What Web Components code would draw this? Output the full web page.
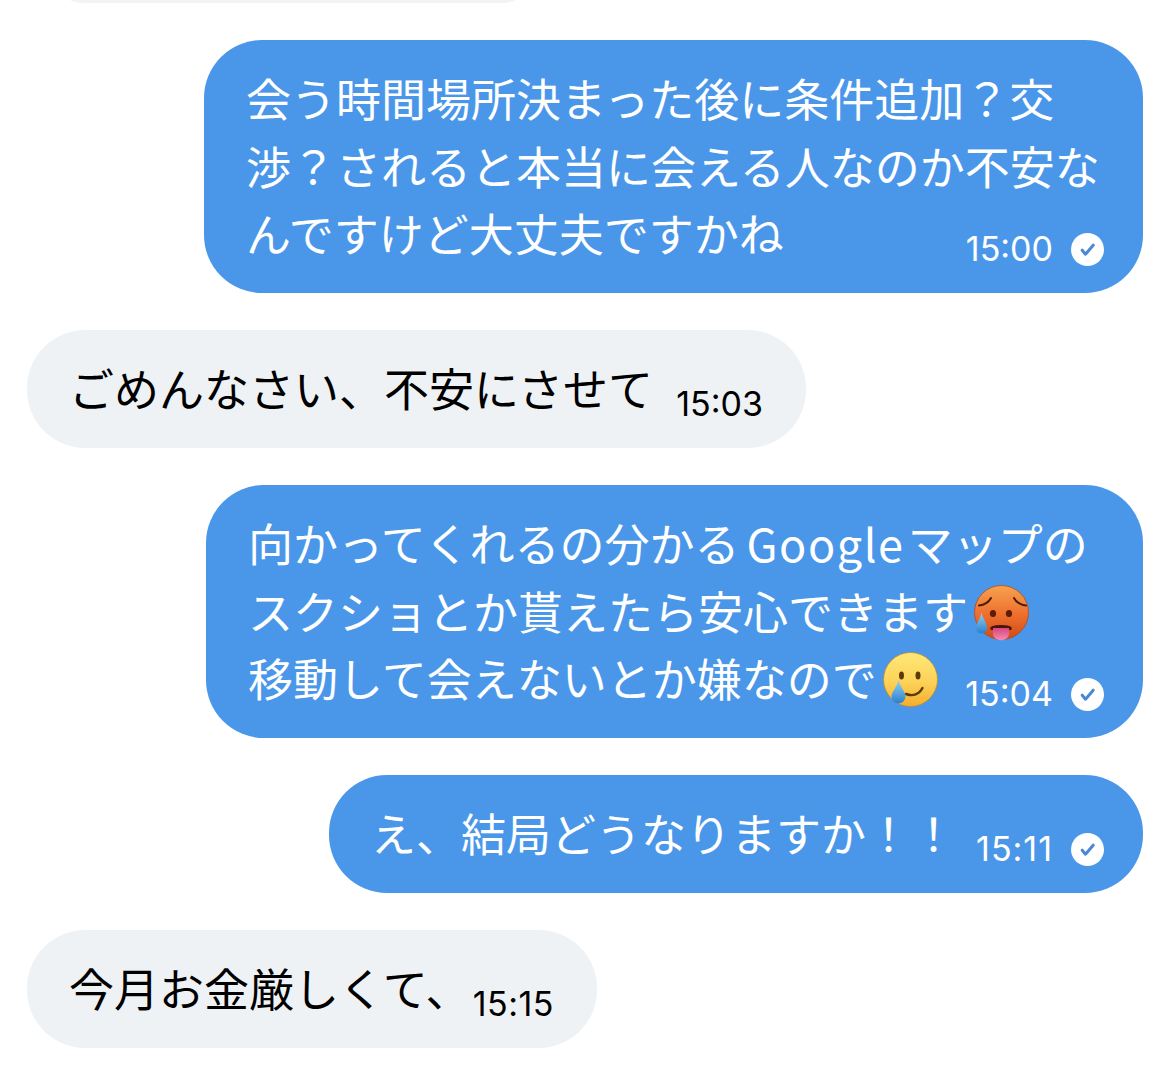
<!DOCTYPE html>
<html lang="ja">
<head>
<meta charset="utf-8">
<title>chat</title>
<style>
  html, body { margin: 0; background: #fff; }
  body { font-family: "Noto Sans CJK JP", "Noto Sans", sans-serif; }
</style>
</head>
<body>
<chat-log>
  <chat-bubble class="cut" side="in" width="480" indent="26"></chat-bubble>

  <chat-bubble side="out" width="939">
    <chat-line>会う時間場所決まった後に条件追加？交</chat-line>
    <chat-line>渉？されると本当に会える人なのか不安な</chat-line>
    <chat-line>んですけど大丈夫ですかね<chat-meta time="15:00" read></chat-meta></chat-line>
  </chat-bubble>

  <chat-bubble side="in" width="779">
    <chat-line>ごめんなさい、不安にさせて<chat-meta time="15:03"></chat-meta></chat-line>
  </chat-bubble>

  <chat-bubble side="out" width="937">
    <chat-line>向かってくれるの分かる<chat-latin>Google</chat-latin>マップの</chat-line>
    <chat-line>スクショとか貰えたら安心できます<chat-emoji kind="hot"></chat-emoji></chat-line>
    <chat-line>移動して会えないとか嫌なので<chat-emoji kind="tear"></chat-emoji><chat-meta time="15:04" read></chat-meta></chat-line>
  </chat-bubble>

  <chat-bubble side="out" width="814">
    <chat-line>え、結局どうなりますか！！<chat-meta time="15:11" track="1" read></chat-meta></chat-line>
  </chat-bubble>

  <chat-bubble side="in" width="570">
    <chat-line>今月お金厳しくて、<chat-meta time="15:15" track="0.5"></chat-meta></chat-line>
  </chat-bubble>
</chat-log>

<script>
class ChatLog extends HTMLElement {
  connectedCallback() {
    this.attachShadow({ mode: 'open' });
    this.shadowRoot.innerHTML = `
      <style>
        :host {
          display: flex;
          flex-direction: column;
          gap: 37.5px;
          padding: 0 27px 17px 27px;
          overflow: hidden;
          height: 1065px;
          box-sizing: border-box;
        }
      </style>
      <slot></slot>
    `;
  }
}
customElements.define('chat-log', ChatLog);

class ChatBubble extends HTMLElement {
  connectedCallback() {
    const out = this.getAttribute('side') === 'out';
    const width = this.getAttribute('width');
    const cut = this.classList.contains('cut');
    this.attachShadow({ mode: 'open' });
    this.shadowRoot.innerHTML = `
      <style>
        :host {
          display: block;
          box-sizing: border-box;
          width: ${width}px;
          flex: none;
          padding: 24px ${out ? 39 : 43}px 26px 42px;
          border-radius: 58px;
          font-size: 45px;
          background: ${out ? '#4a97ea' : '#eff2f4'};
          color: ${out ? '#fff' : '#000'};
          align-self: ${out ? 'flex-end' : 'flex-start'};
          ${cut ? `height: 60px; margin-top: -57.5px; margin-left: ${this.getAttribute('indent')}px; background: #f2f3f5;` : ''}
        }
      </style>
      <slot></slot>
    `;
  }
}
customElements.define('chat-bubble', ChatBubble);

class ChatLine extends HTMLElement {
  connectedCallback() {
    this.attachShadow({ mode: 'open' });
    this.shadowRoot.innerHTML = `
      <style>
        :host {
          display: flex;
          align-items: center;
          height: 67.5px;
          line-height: 67.5px;
          white-space: nowrap;
          font-weight: 400;
        }
      </style>
      <slot></slot>
    `;
  }
}
customElements.define('chat-line', ChatLine);

// Google sits a little wider than the kana around it
class ChatLatin extends HTMLElement {
  connectedCallback() {
    this.attachShadow({ mode: 'open' });
    this.shadowRoot.innerHTML = `
      <style>
        :host { display: block; margin: 0 3px 0 7px; letter-spacing: 1.6px; }
      </style>
      <slot></slot>
    `;
  }
}
customElements.define('chat-latin', ChatLatin);

class ChatMeta extends HTMLElement {
  connectedCallback() {
    const read = this.hasAttribute('read');
    const track = this.getAttribute('track') || 0;
    this.attachShadow({ mode: 'open' });
    this.shadowRoot.innerHTML = `
      <style>
        :host {
          display: flex;
          align-items: center;
          gap: 18px;
          margin-left: auto;
          margin-bottom: 2.5px;
          align-self: flex-end;
          height: 30px;
          font: 400 34px/30px Inter, "Liberation Sans", sans-serif;
          letter-spacing: ${track}px;
        }
        svg { width: 33px; height: 33px; display: block; flex: none; }
      </style>
      <span>${this.getAttribute('time')}</span>
      ${read ? `<svg viewBox="0 0 33 33">
        <circle cx="16.5" cy="16.5" r="16.500" fill="#fff"/>
        <path d="M11.2 17.2l3.300 4 7.700-9" fill="none" stroke="#4a88d4" stroke-width="3" stroke-linecap="round" stroke-linejoin="round"/>
      </svg>` : ''}
    `;
  }
}
customElements.define('chat-meta', ChatMeta);

class ChatEmoji extends HTMLElement {
  connectedCallback() {
    const hot = this.getAttribute('kind') === 'hot';
    const id = hot ? 'h' : 't';
    const face = hot ? `
      <circle cx="27.500" cy="27.500" r="27" fill="url(#${id}f)" stroke="#b5491c" stroke-width=".8"/>
      <path d="M5 20.500c5-.5 9.500-3 12-7.500M52 20.500c-5-.5-9.500-3-12-7.500" fill="none" stroke="#4a1d08" stroke-width="2" stroke-linecap="round"/>
      <ellipse cx="19" cy="28.500" rx="3.100" ry="3.600" fill="#5a1e08"/>
      <ellipse cx="35" cy="28.500" rx="3.100" ry="3.600" fill="#5a1e08"/>
      <path d="M16.500 42.500c1-3.500 20-3.500 21 0v2.500h-21z" fill="#4d1408"/>
      <path d="M19 43h16v5.500c0 9-16 9-16 0z" fill="url(#${id}m)"/>
      <path d="M7.500 27.500c-1.500 7-5.500 11-5.500 15.500a5.600 5.600 0 0 0 11.200 0c0-4.500-4-8.500-5.700-15.500z" fill="url(#${id}d)"/>
    ` : `
      <circle cx="27.500" cy="27.500" r="27" fill="url(#${id}f)" stroke="#c08a2a" stroke-width=".8"/>
      <ellipse cx="18.500" cy="23.500" rx="2.500" ry="4" fill="#5b3a0a"/>
      <ellipse cx="35" cy="23.500" rx="2.500" ry="4" fill="#5b3a0a"/>
      <path d="M23 42c7 2.500 13 .5 16.500-6" fill="none" stroke="#5b3a0a" stroke-width="2.400" stroke-linecap="round"/>
      <path d="M15.500 28c-1.500 7-7 12-7 16.500a7 7 0 0 0 14 0c0-4.500-5.300-9.500-7-16.500z" fill="url(#${id}d)"/>
    `;
    const top = hot ? '#f7a24e' : '#ffe878';
    const mid = hot ? '#ee6e2d' : '#fdd257';
    const bot = hot ? '#cf4a1a' : '#f5ad2d';
    this.attachShadow({ mode: 'open' });
    this.shadowRoot.innerHTML = `
      <style>
        :host { display: block; width: 56px; height: 56px; flex: none; margin: 5px 0 0 6px; }
        svg { display: block; width: 56px; height: 56px; }
      </style>
      <svg viewBox="0 0 56 56" role="img">
        <defs>
          <linearGradient id="${id}f" x1="0" y1="0" x2="0" y2="1">
            <stop offset="0" stop-color="${top}"/><stop offset=".55" stop-color="${mid}"/><stop offset="1" stop-color="${bot}"/>
          </linearGradient>
          <linearGradient id="${id}d" x1="0" y1="0" x2="0" y2="1">
            <stop offset="0" stop-color="#8ed2f2"/><stop offset="1" stop-color="#2a7fd2"/>
          </linearGradient>
          <linearGradient id="${id}m" x1="0" y1="0" x2="0" y2="1">
            <stop offset="0" stop-color="#d9467f"/><stop offset="1" stop-color="#f58ab2"/>
          </linearGradient>
        </defs>
        ${face}
      </svg>
    `;
  }
}
customElements.define('chat-emoji', ChatEmoji);
</script>
</body>
</html>
